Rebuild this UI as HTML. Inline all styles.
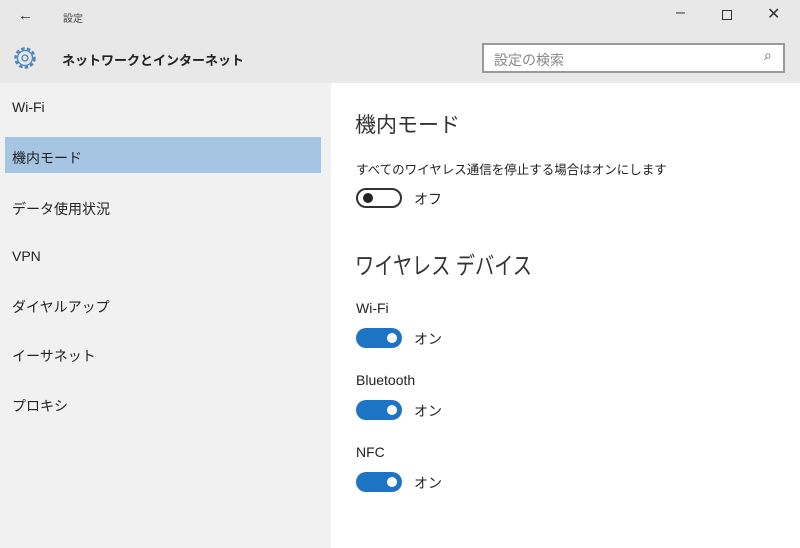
<!DOCTYPE html>
<html><head><meta charset="utf-8"><style>
*{margin:0;padding:0;box-sizing:border-box}
body{width:800px;height:548px;overflow:hidden;background:#fff;font-family:"Liberation Sans","Noto Sans CJK JP",sans-serif;color:#222;position:relative}
.top{position:absolute;left:0;top:0;width:800px;height:83px;background:#e8e8e8}
.side{position:absolute;left:0;top:83px;width:331px;height:465px;background:#f1f1f1}
.a{position:absolute;white-space:nowrap}
.sel{position:absolute;left:5px;top:137px;width:316px;height:36px;background:#a6c5e3}
.tg{position:absolute;left:356px;width:46px;height:20px;border-radius:10px;background:#1e74c4}
.tg::after{content:"";position:absolute;right:5px;top:5px;width:10px;height:10px;border-radius:50%;background:#fff}
.off{background:#fff;border:2px solid #333}
.off::after{left:5px;top:3px;right:auto;background:#222}
.s{font-size:14px}
</style></head><body>
<div class="top"></div>
<div class="side"></div>
<div class="sel"></div>
<div class="a" style="left:18px;top:7px;font-size:15px;color:#333">←</div>
<div class="a" style="left:63px;top:10px;font-size:10px;color:#444">設定</div>
<div class="a" style="left:676px;top:4px;font-size:16px;color:#333">–</div>
<div class="a" style="left:722px;top:10px;width:10px;height:10px;border:1.5px solid #333"></div>
<div class="a" style="left:767px;top:4px;font-size:16px;color:#333">✕</div>
<svg class="a" style="left:11px;top:44px" width="28" height="28" viewBox="0 0 28 28"><circle cx="14" cy="14" r="9.5" fill="none" stroke="#4b86bd" stroke-width="2.5" stroke-dasharray="3.5 2.3"/><circle cx="14" cy="14" r="7.5" fill="none" stroke="#4b86bd" stroke-width="1.3"/><circle cx="14" cy="14" r="3" fill="none" stroke="#4b86bd" stroke-width="1.3"/></svg>
<div class="a" style="left:62px;top:50px;font-size:13px;font-weight:bold;color:#222">ネットワークとインターネット</div>
<div class="a" style="left:482px;top:43px;width:303px;height:30px;background:#fff;border:2px solid #999"></div>
<div class="a" style="left:494px;top:50px;font-size:14px;color:#888">設定の検索</div>
<div class="a" style="left:764px;top:47px;font-size:14px;color:#555">⌕</div>
<div class="a s" style="left:12px;top:99px">Wi-Fi</div>
<div class="a s" style="left:12px;top:148px">機内モード</div>
<div class="a s" style="left:12px;top:199px">データ使用状況</div>
<div class="a s" style="left:12px;top:248px">VPN</div>
<div class="a s" style="left:12px;top:297px">ダイヤルアップ</div>
<div class="a s" style="left:12px;top:346px">イーサネット</div>
<div class="a s" style="left:12px;top:396px">プロキシ</div>
<div class="a" style="left:355px;top:109px;font-size:21px;color:#333">機内モード</div>
<div class="a" style="left:356px;top:159px;font-size:12.5px">すべてのワイヤレス通信を停止する場合はオンにします</div>
<div class="tg off" style="top:188px"></div>
<div class="a s" style="left:414px;top:189px">オフ</div>
<div class="a" style="left:355px;top:246px;font-size:24px;color:#333;transform:scaleX(0.8);transform-origin:left">ワイヤレス デバイス</div>
<div class="a s" style="left:356px;top:300px">Wi-Fi</div>
<div class="tg" style="top:328px"></div>
<div class="a s" style="left:414px;top:329px">オン</div>
<div class="a s" style="left:356px;top:372px">Bluetooth</div>
<div class="tg" style="top:400px"></div>
<div class="a s" style="left:414px;top:401px">オン</div>
<div class="a s" style="left:356px;top:444px">NFC</div>
<div class="tg" style="top:472px"></div>
<div class="a s" style="left:414px;top:473px">オン</div>
</body></html>
